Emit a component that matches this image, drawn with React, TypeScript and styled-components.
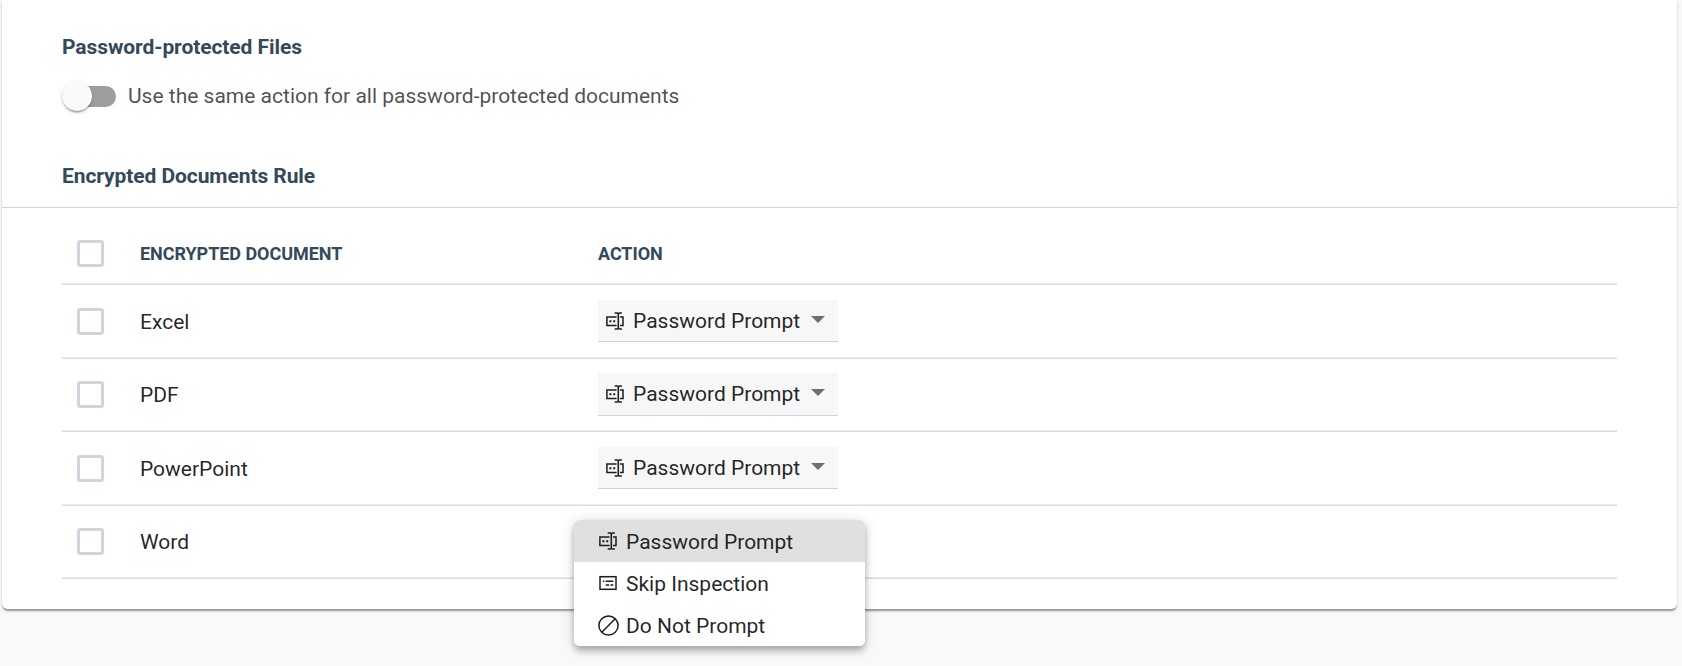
import React from "react";
import styled, { createGlobalStyle } from "styled-components";

const GlobalStyle = createGlobalStyle`
  *, *::before, *::after { box-sizing: border-box; }
  body {
    margin: 0;
    height: 666px;
    overflow: hidden;
    background: #f7f9fb;
    font-family: Roboto, sans-serif;
    font-size: 21px;
    color: rgba(0, 0, 0, 0.87);
  }
`;

const Card = styled.main`
  width: 1675px;
  height: 609px;
  margin-left: 2px;
  padding-top: 31px;
  background: #fff;
  border-radius: 0 0 6px 6px;
  box-shadow: 0 3px 1.5px -1.5px rgba(0, 0, 0, 0.2), 0 1.5px 1.5px rgba(0, 0, 0, 0.14),
    0 1.5px 4.5px rgba(0, 0, 0, 0.12);
`;

const Title = styled.h2`
  margin: 0;
  padding: 0 60px;
  font-size: 21px;
  font-weight: 700;
  letter-spacing: -0.08px;
  line-height: 32px;
  color: #34495a;
`;

const RuleHeader = styled.header`
  margin-top: 49px;
  padding-bottom: 15px;
  border-bottom: 1px solid #d0d3d9;
`;

const ToggleRow = styled.label`
  display: flex;
  align-items: center;
  gap: 12px;
  height: 30px;
  margin-top: 18px;
  padding: 0 60px;
  color: rgba(0, 0, 0, 0.7);
`;

const ToggleTrack = styled.span`
  display: flex;
  align-items: center;
  width: 54px;
  height: 21px;
  border-radius: 10.5px;
  background: #9e9e9e;
`;

const ToggleThumb = styled.span`
  flex: none;
  width: 30px;
  height: 30px;
  border-radius: 50%;
  background: #fafafa;
  box-shadow: 0 3px 1.5px -1.5px rgba(0, 0, 0, 0.2), 0 1.5px 1.5px rgba(0, 0, 0, 0.14),
    0 1.5px 4.5px rgba(0, 0, 0, 0.12);
`;

const Table = styled.section`
  margin: 0 60px;
`;

const Row = styled.div<{ $height: number; $head?: boolean }>`
  display: grid;
  grid-template-columns: 78px 458px 1fr;
  align-items: center;
  height: ${(p) => p.$height}px;
  border-bottom: 1px solid #dadbdc;
  box-shadow: inset 0 -1px #ececec;
  padding: ${(p) => (p.$head ? "15px 0 1px" : "0 0 1px")};
`;

const HeaderLabel = styled.span`
  font-size: 18px;
  font-weight: 700;
  letter-spacing: -0.05px;
  color: #34495a;
`;

const Name = styled.span<{ $height: number }>`
  padding-top: ${(p) => (p.$height === 74 ? 1 : 0)}px;
`;

const Checkbox = styled.span`
  width: 27px;
  height: 27px;
  margin-left: 15px;
  border: 3px solid #d0d5dd;
  border-radius: 3px;
`;

const Select = styled.div<{ $height: number }>`
  display: flex;
  align-items: center;
  width: 240px;
  height: ${(p) => p.$height}px;
  padding: 0 13px 0 8px;
  background: #f7f7f7;
  border-bottom: 1px solid #cfd2d6;
`;

const SelectText = styled.span`
  flex: 1;
  margin-left: 9px;
`;

const Arrow = styled.span`
  border: 7.5px solid transparent;
  border-top-color: #6f6f6f;
  border-bottom: 0;
  margin-top: -3px;
`;

const MenuAnchor = styled.div`
  position: relative;
  width: 240px;
  height: 42px;
`;

const Menu = styled.div`
  position: absolute;
  top: -0.5px;
  left: -24px;
  width: 291px;
  border-radius: 6px;
  overflow: hidden;
  background: #fff;
  box-shadow: 0 3px 6px -1.5px rgba(0, 0, 0, 0.2), 0 6px 7.5px rgba(0, 0, 0, 0.14),
    0 1.5px 15px rgba(0, 0, 0, 0.12);
`;

const MenuItem = styled.div<{ $active?: boolean }>`
  display: flex;
  align-items: center;
  height: 42px;
  padding: 1px 24px 0 23px;
  background: ${(p) => (p.$active ? "#e0e0e0" : "#fff")};
`;

const MenuIcon = styled.span`
  display: flex;
  justify-content: center;
  width: 22px;
  margin: -1px 7px 0 0;
`;

const Glyph = styled.svg`
  flex: none;
  display: block;
  fill: none;
  stroke: #1c1c1c;
  stroke-width: 1.5;
`;

const PromptIcon = () => (
  <Glyph width="18" height="18" viewBox="0 0 18 18">
    <path d="M10.6 5H.9v8.4h9.7M14 5h3v8.4h-3" />
    <path d="M8.7 1h2.4q1.2 0 1.2 1v14q0 1-1.2 1H8.7M15.9 1h-2.4q-1.2 0-1.2 1M12.3 16q0 1 1.2 1h2.4" strokeWidth="1.6" />
    <path d="M3.4 9.2h2M7.2 9.2h2" strokeWidth="1.9" />
  </Glyph>
);

const SkipIcon = () => (
  <Glyph width="18" height="18" viewBox="0 0 18 18">
    <rect x="1" y="2.7" width="16" height="12.6" />
    <path d="M3.8 7.2h1.5M6.7 7.2h7.6M6.7 10.9h3.4M11.4 10.9h2.9" strokeWidth="1.5" />
  </Glyph>
);

const BlockIcon = () => (
  <Glyph width="21" height="21" viewBox="0 0 21 21">
    <circle cx="10.5" cy="10.5" r="9.6" />
    <path d="M3.8 17.2 17.2 3.8" />
  </Glyph>
);

const rows = [
  { name: "Excel", height: 74, selectHeight: 42 },
  { name: "PDF", height: 73, selectHeight: 43 },
  { name: "PowerPoint", height: 74, selectHeight: 42 },
  { name: "Word", height: 73, selectHeight: 42, open: true },
];

const options = [
  { label: "Password Prompt", icon: <PromptIcon /> },
  { label: "Skip Inspection", icon: <SkipIcon /> },
  { label: "Do Not Prompt", icon: <BlockIcon /> },
];

export default function App() {
  return (
    <>
      <GlobalStyle />
      <Card>
        <Title>Password-protected Files</Title>
        <ToggleRow>
          <ToggleTrack>
            <ToggleThumb />
          </ToggleTrack>
          Use the same action for all password-protected documents
        </ToggleRow>
        <RuleHeader>
          <Title>Encrypted Documents Rule</Title>
        </RuleHeader>
        <Table>
          <Row $height={77} $head>
            <Checkbox />
            <HeaderLabel>ENCRYPTED DOCUMENT</HeaderLabel>
            <HeaderLabel>ACTION</HeaderLabel>
          </Row>
          {rows.map((row) => (
            <Row key={row.name} $height={row.height}>
              <Checkbox />
              <Name $height={row.height}>{row.name}</Name>
              {row.open ? (
                <MenuAnchor>
                  <Menu>
                    {options.map((option, i) => (
                      <MenuItem key={option.label} $active={i === 0}>
                        <MenuIcon>{option.icon}</MenuIcon>
                        {option.label}
                      </MenuItem>
                    ))}
                  </Menu>
                </MenuAnchor>
              ) : (
                <Select $height={row.selectHeight}>
                  <PromptIcon />
                  <SelectText>Password Prompt</SelectText>
                  <Arrow />
                </Select>
              )}
            </Row>
          ))}
        </Table>
      </Card>
    </>
  );
}
